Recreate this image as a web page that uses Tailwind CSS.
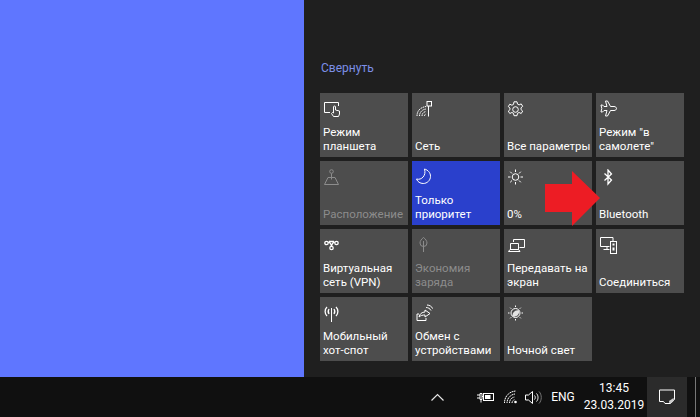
<!DOCTYPE html>
<html><head><meta charset="utf-8"><script src="https://cdn.jsdelivr.net/npm/@tailwindcss/browser@4"></script></head>
<body class="m-0 bg-[#1f1f1f]">
<div class="relative w-[700px] h-[417px] overflow-hidden flex flex-col font-['Roboto','Open_Sans',sans-serif] text-[12px] text-white">
  <div class="flex h-[377px] text-[11.5px] tracking-[0.02px]">
    <div class="w-[304px] bg-[#5f76ff]"></div>
    <div class="flex-1 bg-[#1f1f1f] pl-4 flex flex-col">
      <div class="pt-[59px] pl-[1px] h-[93px] text-[#7c8fe8] leading-[18px] text-[12px]">Свернуть</div>
      <div class="grid grid-cols-[repeat(4,88px)] auto-rows-[64px] gap-1 whitespace-nowrap">
        <div class="flex flex-col justify-between bg-[#4d4d4d] px-[3px] pt-[8px] pb-[4px]">
          <svg class="w-[17px] h-[17px] ml-[1px]" viewBox="0 0 17 17" fill="none" stroke="#fff"><path d="M6 11.500H.5V1.500H14.500V5"/><path d="M9.500 15.500 7.500 12.500l1-1 1 .5V6a1 1 0 0 1 2 0v3l4 1v3l-1 2.500z" fill="#4d4d4d"/></svg>
          <div class="leading-[14px]">Режим<br>планшета</div>
        </div>
        <div class="flex flex-col justify-between bg-[#4d4d4d] px-[3px] pt-[8px] pb-[4px]">
          <svg class="w-[17px] h-[17px] ml-[1px]" viewBox="0 0 17 17" fill="none" stroke="#fff"><path d="M1 15C1 10 4 6.500 10 5.500M3.500 15C3.500 11.500 6 8.500 10 8M6 15C6 12.500 7.500 11 10 10.500M8.500 15c0-1 .5-1.800 1.500-2" stroke-dasharray="1.500 .7"/><path d="M12.500 5v10.500"/><rect x="11" y=".5" width="4.500" height="4.500"/></svg>
          <div class="leading-[14px]">Сеть</div>
        </div>
        <div class="flex flex-col justify-between bg-[#4d4d4d] px-[3px] pt-[8px] pb-[4px]">
          <svg class="w-[17px] h-[17px]" viewBox="0 0 17 17" fill="none" stroke="#fff"><circle cx="8.500" cy="8.500" r="2.800"/><path d="M7 .8h3l.5 2.300 1.600.8 2.100-1 1.500 2.400-1.700 1.500v1.800l1.700 1.500-1.500 2.400-2.100-1-1.600.8-.5 2.400H7l-.5-2.400-1.600-.8-2.100 1-1.500-2.400 1.700-1.500V7.100L1.300 5.600l1.500-2.400 2.100 1 1.600-.8z"/></svg>
          <div class="leading-[14px]">Все параметры</div>
        </div>
        <div class="flex flex-col justify-between bg-[#4d4d4d] px-[3px] pt-[8px] pb-[4px]">
          <svg class="w-[17px] h-[17px] ml-[1px] -mt-[1px]" viewBox="0 0 17 17" fill="none" stroke="#fff"><path d="M5.500 1h2l3 5.500H14c1.500 0 2.500 1 2.500 2s-1 2-2.500 2h-3.500l-3 5.500h-2l1.500-5.500H4l-1.500 1.500H1l.8-3.500L1 5h1.500L4 6.500h3z"/></svg>
          <div class="leading-[14px]">Режим "в<br>самолете"</div>
        </div>

        <div class="flex flex-col justify-between bg-[#4d4d4d] px-[3px] pt-[8px] pb-[4px] text-[#8c8c8c]">
          <svg class="w-[17px] h-[17px] ml-[1px]" viewBox="0 0 17 17" fill="none" stroke="#8c8c8c"><circle cx="7.500" cy="2.500" r="1.800"/><path d="M7.500 4.500v6M4 8.500h7l3.500 7H.5z"/></svg>
          <div class="leading-[14px]">Расположение</div>
        </div>
        <div class="flex flex-col justify-between bg-[#2a40cc] px-[3px] pt-[8px] pb-[4px]">
          <svg class="w-[17px] h-[17px] ml-[1px] -mt-[1px]" viewBox="0 0 17 17" fill="none" stroke="#fff"><path d="M8.500 1c3.500 1 6 3.800 6 7.300 0 4-3.300 7.200-7.300 7.200-3 0-5.700-1.700-6.700-4.500 5 1.500 10-3.500 8-10z"/></svg>
          <div class="leading-[14px]">Только<br>приоритет</div>
        </div>
        <div class="flex flex-col justify-between bg-[#4d4d4d] px-[3px] pt-[8px] pb-[4px]">
          <svg class="w-[17px] h-[17px]" viewBox="0 0 17 17" fill="none" stroke="#fff"><circle cx="8.500" cy="8" r="3.300"/><path d="M8.500 .5V3M8.500 13v2.500M1 8h2.500M13.500 8H16M3.200 2.700 5 4.500M12 11.500l1.800 1.800M13.800 2.700 12 4.500M5 11.500l-1.800 1.800"/></svg>
          <div class="leading-[14px]">0%</div>
        </div>
        <div class="flex flex-col justify-between bg-[#4d4d4d] px-[3px] pt-[8px] pb-[4px]">
          <svg class="w-[17px] h-[17px] ml-[1px]" viewBox="0 0 17 17" fill="none" stroke="#fff" stroke-width="1.300"><path d="M4.500 4.500 11.500 11 8 15V1l3.500 4-7 6.500"/></svg>
          <div class="leading-[14px]">Bluetooth</div>
        </div>

        <div class="flex flex-col justify-between bg-[#4d4d4d] px-[3px] pt-[8px] pb-[4px]">
          <svg class="w-[17px] h-[17px] ml-[1px]" viewBox="0 0 17 17" fill="none" stroke="#fff" stroke-width="1.300"><circle cx="2.500" cy="6" r="1.700"/><circle cx="7.500" cy="11" r="1.700"/><circle cx="12.500" cy="6" r="1.700"/><path d="M4.200 5.500C6 5 7 7 7.500 9.300M10.800 5.500C9 5 8 7 7.500 9.300M5 4.500h5"/></svg>
          <div class="leading-[14px]">Виртуальная<br>сеть (VPN)</div>
        </div>
        <div class="flex flex-col justify-between bg-[#4d4d4d] px-[3px] pt-[8px] pb-[4px] text-[#8c8c8c]">
          <svg class="w-[17px] h-[17px] ml-[1px]" viewBox="0 0 17 17" fill="none" stroke="#8c8c8c"><path d="M7.500 .5c2 1.500 3.500 3.500 3.500 5.500a3.500 3.500 0 0 1-7 0c0-2 1.500-4 3.500-5.500zM7.500 4v11"/></svg>
          <div class="leading-[14px]">Экономия<br>заряда</div>
        </div>
        <div class="flex flex-col justify-between bg-[#4d4d4d] px-[3px] pt-[8px] pb-[4px]">
          <svg class="w-[17px] h-[17px] ml-[1px]" viewBox="0 0 17 17" fill="none" stroke="#fff"><path d="M5.500 5V2.500h11v8h-5"/><path d="M2.500 6.500h8v6h-8zM.5 14.500h11.500l-1.500-2H2z"/></svg>
          <div class="leading-[14px]">Передавать на<br>экран</div>
        </div>
        <div class="flex flex-col justify-between bg-[#4d4d4d] px-[3px] pt-[8px] pb-[4px]">
          <svg class="w-[17px] h-[17px] ml-[1px]" viewBox="0 0 17 17" fill="none" stroke="#fff"><path d="M9.500 9.500H.5V.5H13V4M7 9.500v2.500M3.500 12.500H9.500"/><rect x="10.500" y="4.500" width="6" height="12"/><rect x="12.500" y="6.500" width="2" height="2" fill="#fff" stroke="none"/><rect x="12.500" y="10.500" width="2" height="3" fill="#fff" stroke="none"/></svg>
          <div class="leading-[14px]">Соединиться</div>
        </div>

        <div class="flex flex-col justify-between bg-[#4d4d4d] px-[3px] pt-[8px] pb-[4px]">
          <svg class="w-[17px] h-[17px] ml-[1px]" viewBox="0 0 17 17" fill="none" stroke="#fff"><path d="M7.500 3v14" /><path d="M3 2C.5 4.500.5 8.500 3 11M5 4c-1 1.500-1 3.500 0 5M12 2c2.500 2.500 2.500 6.500 0 9M10 4c1 1.500 1 3.500 0 5" stroke-width="1.300"/></svg>
          <div class="leading-[14px]">Мобильный<br>хот-спот</div>
        </div>
        <div class="flex flex-col justify-between bg-[#4d4d4d] px-[3px] pt-[8px] pb-[4px]">
          <svg class="w-[17px] h-[17px] ml-[1px] -mt-[1px]" viewBox="0 0 17 17" fill="none" stroke="#fff"><path d="M3 10H1v6.500h9V14M3 13c.5-3 3-5 6-5V6l5 3.500L9 13v-2c-2.500 0-4.500.5-6 2zM10 3.500c2 0 4 1 5 3M11 1c2.500 0 4.800 1.500 5.800 3.700"/></svg>
          <div class="leading-[14px]">Обмен с<br>устройствами</div>
        </div>
        <div class="flex flex-col justify-between bg-[#4d4d4d] px-[3px] pt-[8px] pb-[4px]">
          <svg class="w-[17px] h-[17px]" viewBox="0 0 17 17" fill="none" stroke="#fff"><circle cx="8.500" cy="8" r="4.500"/><path d="M5.500 11.500C5 8 8 4.500 12 5.500c1 3-2 7-6.500 6z" fill="#fff" fill-opacity=".85" stroke="none"/><path d="M8.500 .5V2M8.500 14v1.500M1 8h1.500M14.500 8H16M3.200 2.700l1 1M12.800 12.300l1 1M13.800 2.700l-1 1M4.200 12.300l-1 1"/></svg>
          <div class="leading-[14px]">Ночной свет</div>
        </div>
      </div>
    </div>
  </div>
  <div class="flex items-center h-[40px] bg-[#101010] pl-[431px]">
    <svg class="w-[13px] h-[8px]" viewBox="0 0 13 8" fill="none" stroke="#e6e6e6" stroke-width="1.200"><path d="M.5 7.500 6.500 1.500l6 6"/></svg>
    <svg class="w-[17px] h-[12px] ml-[33px]" viewBox="0 0 17 12" fill="none" stroke="#fff"><path d="M0 4h3M0 7h3M3 2.500v6h2V2.500zM4 9v2.500M5 5.500h1.500"/><rect x="6.500" y="2.500" width="10" height="7"/><rect x="8" y="4" width="5.500" height="4" fill="#fff" stroke="none"/></svg>
    <svg class="w-[14px] h-[14px] ml-[10px]" viewBox="0 0 14 14" fill="none" stroke="#fff"><path d="M.5 13C.5 7 4.500 1.500 12 1M3 13c0-4.500 3.500-8.500 8-9M5.500 13c0-3 2-5.500 5-6M8 13c0-1.500.8-2.800 2.500-3.300" stroke-dasharray="1.500 .5"/><circle cx="11.500" cy="12" r="1.300" fill="#fff" stroke="none"/></svg>
    <svg class="w-[17px] h-[15px] ml-[7px]" viewBox="0 0 17 15" fill="none" stroke="#fff"><path d="M.5 5v5h3L7.500 13.500V1.500L3.500 5z"/><path d="M9.500 5.500c1 1 1 3 0 4M11.500 3.500c2 2 2 6 0 8"/><path d="M14 1.500c3 3 3 9 0 12" stroke="#777"/></svg>
    <div class="w-[24px] ml-[9px] text-center leading-none">ENG</div>
    <div class="w-[56px] ml-[11px] text-center leading-[17px] flex flex-col items-center"><span>13:45</span><span>23.03.2019</span></div>
    <div class="w-[40px] h-full ml-[5px] bg-[#2b2b2b] flex items-center justify-center">
      <svg class="w-[16px] h-[16px]" viewBox="0 0 16 16" fill="none" stroke="#fff"><path d="M.5 1h15v9.500L11.500 14.500H6L4.500 12.500H.5z"/><path d="M10.500 14c-1-1-.5-2.500 1-3l3-2 .5 2.500-2.500 2.500z" fill="#ccc" stroke="none"/></svg>
    </div>
    <div class="w-[1px] h-full ml-[8px] bg-[#777]"></div>
  </div>
  <svg class="absolute left-[545px] top-[171px] w-[55px] h-[55px]" viewBox="0 0 55 55"><path d="M0 13h27V0L55 27 27 55V41H0z" fill="#ed1c24"/></svg>
</div>
</body></html>
